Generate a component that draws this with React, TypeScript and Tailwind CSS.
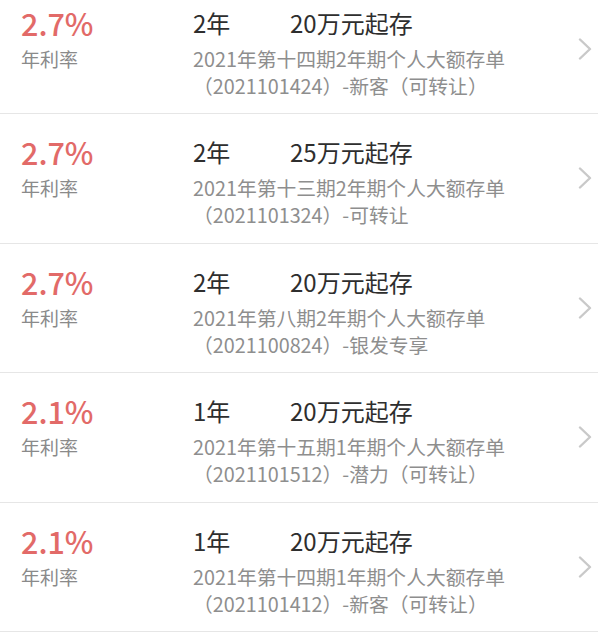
import React from "react";

type Item = { rate: string; term: string; amount: string; line1: string; line2: string };

const items: Item[] = [
  { rate: "2.7%", term: "2年", amount: "20万元起存", line1: "2021年第十四期2年期个人大额存单", line2: "（2021101424）-新客（可转让）" },
  { rate: "2.7%", term: "2年", amount: "25万元起存", line1: "2021年第十三期2年期个人大额存单", line2: "（2021101324）-可转让" },
  { rate: "2.7%", term: "2年", amount: "20万元起存", line1: "2021年第八期2年期个人大额存单", line2: "（2021100824）-银发专享" },
  { rate: "2.1%", term: "1年", amount: "20万元起存", line1: "2021年第十五期1年期个人大额存单", line2: "（2021101512）-潜力（可转让）" },
  { rate: "2.1%", term: "1年", amount: "20万元起存", line1: "2021年第十四期1年期个人大额存单", line2: "（2021101412）-新客（可转让）" },
];

function Chevron() {
  return (
    <svg width="14" height="22" viewBox="0 0 14 22" className="shrink-0">
      <polyline points="2,1.5 12,11 2,20.5" fill="none" stroke="#c9c9c9" strokeWidth="2.4" strokeLinecap="round" strokeLinejoin="round" />
    </svg>
  );
}

export default function App() {
  return (
    <div
      className="w-[598px] h-[640px] overflow-hidden bg-white"
      style={{ fontFamily: "'Noto Sans CJK SC', 'Noto Sans', sans-serif" }}
    >
      <div className="mt-[-15.5px]">
        {items.map((it, i) => (
          <div key={i} className="flex h-[129.5px] border-b border-[#e6e6e6] pl-[21px] pr-[6px]">
            <div className="w-[172px] shrink-0 pt-[23px]">
              <div className="text-[30.5px] leading-[31px] font-medium text-[#e26a68]">{it.rate}</div>
              <div className="mt-[7px] text-[19px] leading-[26px] text-[#8a8a8a]">年利率</div>
            </div>
            <div className="flex-1 pt-[23px]">
              <div className="flex text-[24px] leading-[30px] text-[#2e2e2e]">
                <span className="w-[97px]">{it.term}</span>
                <span>{it.amount}</span>
              </div>
              <div className="mt-[7px] text-[19.8px] leading-[27px] text-[#8e8e8e]">
                <div>{it.line1}</div>
                <div>{it.line2}</div>
              </div>
            </div>
            <div className="self-center">
              <Chevron />
            </div>
          </div>
        ))}
      </div>
    </div>
  );
}
